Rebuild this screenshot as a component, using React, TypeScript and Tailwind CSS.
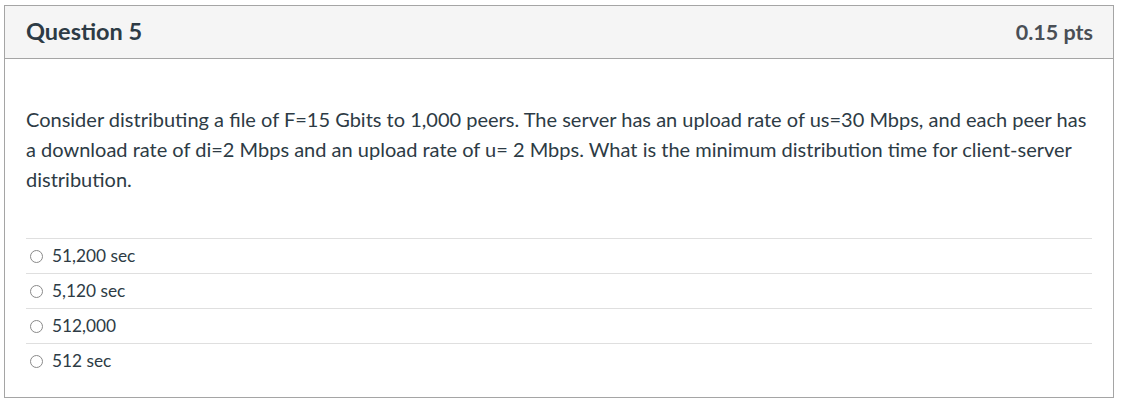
import React from "react";

const answers = ["51,200 sec", "5,120 sec", "512,000", "512 sec"];

export default function App() {
  return (
    <div className="bg-white w-[1123px] h-[404px] pt-[5px] pl-[4px]" style={{ fontFamily: "Lato, 'Liberation Sans', sans-serif" }}>
      <div className="w-[1110px] h-[393px] border border-[#a5a5a5] flex flex-col">
        <div className="h-[53px] bg-[#f5f5f5] border-b border-[#a5a5a5] flex items-center justify-between pl-[21px] pr-[20px] shrink-0">
          <div className="text-[23.5px] font-bold text-[#2d3b45]">Question 5</div>
          <div className="text-[21.5px] font-bold text-[#4a4f55]">0.15 pts</div>
        </div>
        <div className="px-[21px] pt-[45px]">
          <p className="text-[20px] leading-[30px] text-[#2d3b45]">
            Consider distributing a file of F=15 Gbits to 1,000 peers. The server has an upload rate of us=30 Mbps, and each peer has a download rate of di=2 Mbps and an upload rate of u= 2 Mbps. What is the minimum distribution time for client-server distribution.
          </p>
          <div className="mt-[44px]">
            {answers.map((a) => (
              <div key={a} className="h-[35px] border-t border-[#dfdfdf] flex items-center gap-[9px] pl-[4px] text-[17.3px] text-[#2d3b45]">
                <span className="w-[13px] h-[13px] rounded-full border border-[#8a8a8a] inline-block" />
                <span>{a}</span>
              </div>
            ))}
          </div>
        </div>
      </div>
    </div>
  );
}
